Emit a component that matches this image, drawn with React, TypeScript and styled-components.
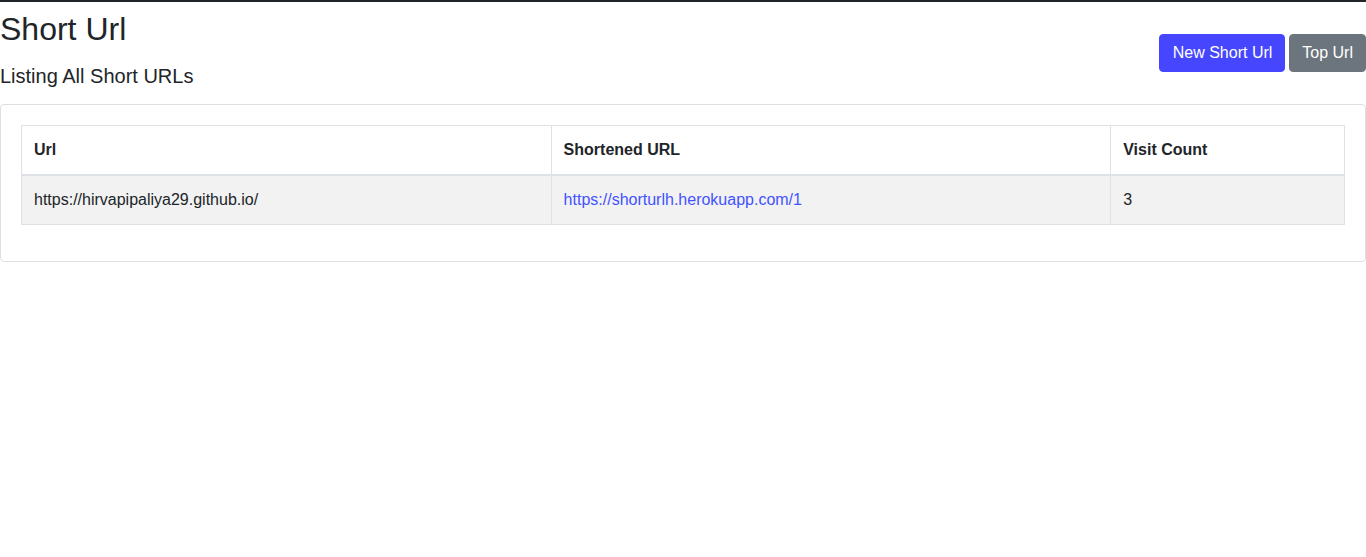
import React from "react";
import styled, { createGlobalStyle } from "styled-components";

const GlobalStyle = createGlobalStyle`
  html, body { margin: 0; padding: 0; background: #fff; }
  body {
    font-family: "Liberation Sans", Arial, Helvetica, sans-serif;
    font-size: 16px;
    line-height: 1.5;
    color: #212529;
  }
  * { box-sizing: border-box; }
`;

const Page = styled.div`
  border-top: 2px solid #212529;
`;

const Header = styled.header`
  display: flex;
  justify-content: space-between;
  align-items: center;
  padding-top: 8px;
`;

const TitleBlock = styled.div`
  display: flex;
  flex-direction: column;
`;

const Title = styled.h1`
  margin: 0 0 16px;
  font-size: 32px;
  font-weight: 400;
  line-height: 1.2;
`;

const Subtitle = styled.h5`
  margin: 0 0 8px;
  font-size: 20px;
  font-weight: 400;
  line-height: 1.2;
`;

const Actions = styled.div`
  display: flex;
  gap: 4px;
`;

const Button = styled.button<{ $variant: "primary" | "secondary" }>`
  font-family: inherit;
  font-size: 16px;
  line-height: 1.5;
  padding: ${(p) => (p.$variant === "primary" ? "6px 12px 6px 13px" : "6px 12px")};
  border: 1px solid transparent;
  border-radius: 4px;
  color: #fff;
  cursor: pointer;
  background: ${(p) => (p.$variant === "primary" ? "#4646ff" : "#6c757d")};
  border-color: ${(p) => (p.$variant === "primary" ? "#4646ff" : "#6c757d")};
`;

const Card = styled.section`
  margin-top: 8px;
  border: 1px solid #dfdfdf;
  border-radius: 4px;
  padding: 20px;
`;

const Table = styled.table`
  width: 100%;
  border-collapse: collapse;
  margin-bottom: 16px;
`;

const Th = styled.th<{ $w: number }>`
  width: ${(p) => p.$w}px;
  text-align: left;
  font-weight: 700;
  padding: 12px;
  line-height: 24px;
  border: 1px solid #dee2e6;
  border-bottom-width: 2px;
`;

const Row = styled.tr<{ $striped?: boolean }>`
  background: ${(p) => (p.$striped ? "#f2f2f2" : "transparent")};
`;

const Td = styled.td`
  padding: 12px;
  line-height: 24px;
  border: 1px solid #dee2e6;
`;

const Link = styled.a`
  color: #4353ff;
  text-decoration: none;
`;

const rows = [
  {
    url: "https://hirvapipaliya29.github.io/",
    short: "https://shorturlh.herokuapp.com/1",
    count: 3,
  },
];

export default function App() {
  return (
    <>
      <GlobalStyle />
      <Page>
        <Header>
          <TitleBlock>
            <Title>Short Url</Title>
            <Subtitle>Listing All Short URLs</Subtitle>
          </TitleBlock>
          <Actions>
            <Button $variant="primary">New Short Url</Button>
            <Button $variant="secondary">Top Url</Button>
          </Actions>
        </Header>
        <Card>
          <Table>
            <thead>
              <tr>
                <Th $w={530}>Url</Th>
                <Th $w={560}>Shortened URL</Th>
                <Th $w={234}>Visit Count</Th>
              </tr>
            </thead>
            <tbody>
              {rows.map((r, i) => (
                <Row key={i} $striped={i % 2 === 0}>
                  <Td>{r.url}</Td>
                  <Td>
                    <Link href="#">{r.short}</Link>
                  </Td>
                  <Td>{r.count}</Td>
                </Row>
              ))}
            </tbody>
          </Table>
        </Card>
      </Page>
    </>
  );
}
